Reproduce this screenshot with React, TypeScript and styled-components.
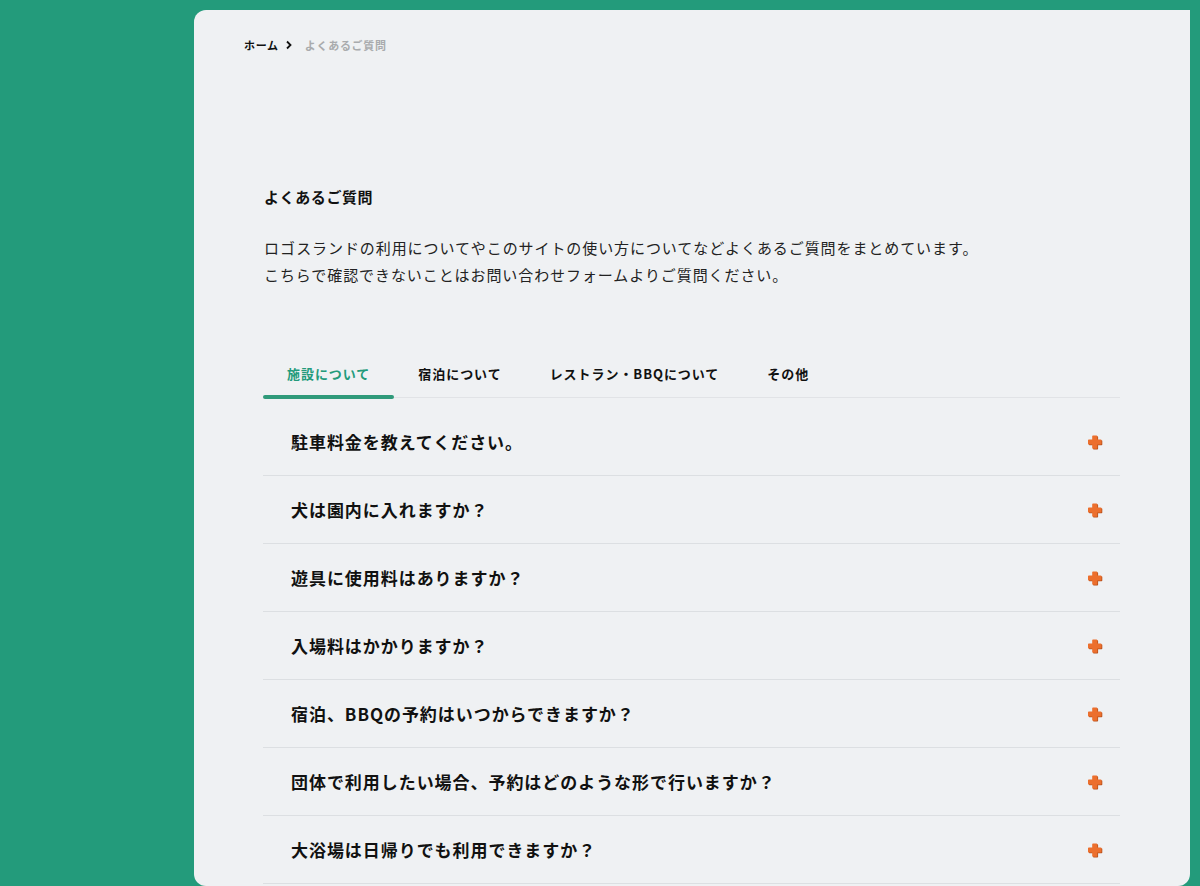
import React, { useState } from 'react'
import styled, { createGlobalStyle } from 'styled-components'

const GlobalStyle = createGlobalStyle`
  html, body {
    margin: 0;
    padding: 0;
    background: #239b7b;
    font-family: "Noto Sans CJK JP", "Inter", sans-serif;
    color: #111;
  }
  body {
    height: 886px;
    overflow: hidden;
  }
`

const Page = styled.div`
  display: flex;
  min-height: 886px;
`

const Side = styled.aside`
  width: 194px;
  flex-shrink: 0;
`

const Panel = styled.main`
  flex: 1;
  margin: 10px 10px 0 0;
  background: #eff1f3;
  border-radius: 12px 0 12px 12px;
  padding: 25px 70px 0 70px;
  height: 876px;
  box-sizing: border-box;
`

const Breadcrumb = styled.nav`
  display: flex;
  align-items: center;
  margin-left: -20px;
  font-size: 11px;
  font-weight: 700;
  letter-spacing: 0.7px;
  height: 20px;
`

const Crumb = styled.span<{ $current?: boolean }>`
  color: ${(p) => (p.$current ? '#a9abad' : '#111')};
`

const Chevron = styled.svg`
  margin: 0 12px 0 6px;
`

const Title = styled.h1`
  margin: 131px 0 0;
  font-size: 15px;
  font-weight: 700;
  letter-spacing: 0.6px;
  line-height: 22px;
`

const Lead = styled.p`
  margin: 26px 0 0;
  font-size: 15px;
  line-height: 27px;
  letter-spacing: 0.92px;
  color: #222;
`

const Tabs = styled.div`
  display: flex;
  margin-top: 64px;
  border-bottom: 1px solid #e1e3e6;
  margin-left: -1px;
`

const Tab = styled.button<{ $active?: boolean }>`
  position: relative;
  background: none;
  border: 0;
  padding: 0 24px 3px;
  height: 45px;
  font-family: inherit;
  font-size: 13px;
  font-weight: 700;
  letter-spacing: 0.95px;
  color: ${(p) => (p.$active ? '#239b7b' : '#111')};
  cursor: pointer;
  &::after {
    content: '';
    display: ${(p) => (p.$active ? 'block' : 'none')};
    position: absolute;
    left: 0;
    right: 0;
    bottom: -2px;
    height: 4px;
    border-radius: 2px;
    background: #2f9a7a;
  }
`

const List = styled.ul`
  list-style: none;
  margin: 10px 0 0;
  padding: 0;
  margin-left: -1px;
`

const Item = styled.li`
  display: flex;
  align-items: center;
  justify-content: space-between;
  height: 67px;
  padding: 0 16px 0 28px;
  border-bottom: 1px solid #dcdfe2;
`

const Question = styled.span`
  font-size: 17px;
  font-weight: 700;
  letter-spacing: 0.95px;
`

const crossPath =
  'M7 2.5h3.5a0.8 0.8 0 0 1 .8.8V6.5h3.4a0.8 0.8 0 0 1 .8.8v3.4a0.8 0.8 0 0 1-.8.8H11.3v3.4a0.8 0.8 0 0 1-.8.8H7a0.8 0.8 0 0 1-.8-.8V11.5H2.8a0.8 0.8 0 0 1-.8-.8V7.3a0.8 0.8 0 0 1 .8-.8h3.4V3.3A0.8 0.8 0 0 1 7 2.5z'

const PlusIcon = () => (
  <svg width="18" height="18" viewBox="0 0 18 18">
    <path d={crossPath} fill="#b8521c" transform="translate(0.8 0.8)" />
    <path d={crossPath} fill="#ec6f2d" />
  </svg>
)

const tabs = ['施設について', '宿泊について', 'レストラン・BBQについて', 'その他']

const questions = [
  '駐車料金を教えてください。',
  '犬は園内に入れますか？',
  '遊具に使用料はありますか？',
  '入場料はかかりますか？',
  '宿泊、BBQの予約はいつからできますか？',
  '団体で利用したい場合、予約はどのような形で行いますか？',
  '大浴場は日帰りでも利用できますか？',
]

export default function App() {
  const [active, setActive] = useState(0)
  return (
    <>
      <GlobalStyle />
      <Page>
        <Side />
        <Panel>
          <Breadcrumb>
            <Crumb>ホーム</Crumb>
            <Chevron width="8" height="10" viewBox="0 0 8 10">
              <path d="M2 1.5l3.5 3.5L2 8.5" stroke="#111" strokeWidth="1.8" fill="none" />
            </Chevron>
            <Crumb $current>よくあるご質問</Crumb>
          </Breadcrumb>
          <Title>よくあるご質問</Title>
          <Lead>
            ロゴスランドの利用についてやこのサイトの使い方についてなどよくあるご質問をまとめています。
            <br />
            こちらで確認できないことはお問い合わせフォームよりご質問ください。
          </Lead>
          <Tabs>
            {tabs.map((t, i) => (
              <Tab key={t} $active={i === active} onClick={() => setActive(i)}>
                {t}
              </Tab>
            ))}
          </Tabs>
          <List>
            {questions.map((q) => (
              <Item key={q}>
                <Question>{q}</Question>
                <PlusIcon />
              </Item>
            ))}
          </List>
        </Panel>
      </Page>
    </>
  )
}
